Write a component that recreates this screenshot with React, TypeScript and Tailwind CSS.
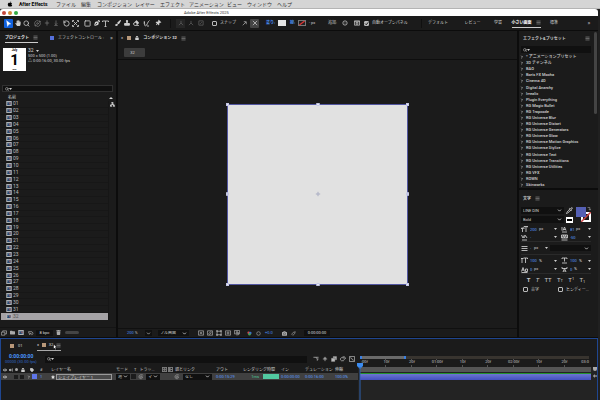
import type { ReactNode } from "react";
import {
  FaApple,
  FaCamera,
  FaEraser,
  FaEye,
  FaFolder,
  FaHandPaper,
  FaLock,
  FaPaintBrush,
  FaPenNib,
  FaStamp,
  FaStar,
  FaTag,
  FaThumbtack,
  FaTrash,
  FaVolumeUp,
} from "react-icons/fa";
import {
  ChevronDown,
  ChevronRight,
  Menu,
  Network,
  Orbit,
  Pipette,
  RotateCcw,
  Search,
  Square,
} from "lucide-react";

const menus = [
  { label: "ファイル", width: "w-[25px]" },
  { label: "編集", width: "w-[16px]" },
  { label: "コンポジション", width: "w-[38px]" },
  { label: "レイヤー", width: "w-[25px]" },
  { label: "エフェクト", width: "w-[29px]" },
  { label: "アニメーション", width: "w-[38px]" },
  { label: "ビュー", width: "w-[20px]" },
  { label: "ウィンドウ", width: "w-[30px]" },
  { label: "ヘルプ", width: "w-[20px]" },
];

const items = Array.from({ length: 32 }, (_, i) => String(i + 1).padStart(2, "0"));

const effects = [
  "* アニメーションプリセット",
  "3D チャンネル",
  "BAO",
  "Boris FX Mocha",
  "Cinema 4D",
  "Digital Anarchy",
  "Irrealix",
  "Plugin Everything",
  "RG Magic Bullet",
  "RG Trapcode",
  "RG Universe Blur",
  "RG Universe Distort",
  "RG Universe Generators",
  "RG Universe Glow",
  "RG Universe Motion Graphics",
  "RG Universe Stylize",
  "RG Universe Text",
  "RG Universe Transitions",
  "RG Universe Utilities",
  "RG VFX",
  "ROWN",
  "Skinworks",
];

const ticks = ["10f", "20f", "01:00f", "10f", "20f", "02:00f", "10f", "20f"];

const Slot = ({ label, active, children }: { label: string; active?: boolean; children: ReactNode }) => (
  <button
    aria-label={label}
    className={`flex h-[9px] w-[9px] shrink-0 items-center justify-center rounded-[1px] ${active ? "bg-[#1060dc] text-white" : ""}`}
  >
    {children}
  </button>
);

// Small line drawing on a 14 unit grid
const Glyph = ({ d, size = "size-[7px]", fill = false }: { d: string; size?: string; fill?: boolean }) => (
  <svg
    viewBox="0 0 14 14"
    className={`${size} shrink-0`}
    fill={fill ? "currentColor" : "none"}
    stroke="currentColor"
    strokeWidth={fill ? 0.5 : 1.7}
  >
    <path d={d} />
  </svg>
);

const Caret = () => (
  <svg viewBox="0 0 6 4" className="h-[2px] w-[3px] shrink-0" fill="currentColor">
    <path d="M0 0h6L3 4z" />
  </svg>
);

const Burger = () => <Menu strokeWidth={3} className="size-[5px] shrink-0 text-[#909090]" />;

function Select({ label, value, className = "" }: { label: string; value: string; className?: string }) {
  return (
    <div className={`relative flex shrink-0 items-center bg-[#101010] ${className}`}>
      <select aria-label={label} className="h-full w-full appearance-none pl-[2px] leading-none outline-none">
        <option>{value}</option>
      </select>
      <ChevronDown strokeWidth={4} className="pointer-events-none absolute right-[2px] size-[5px]" />
    </div>
  );
}

function SearchBox({ label, className = "" }: { label: string; className?: string }) {
  return (
    <div className={`flex items-center bg-[#101010] px-[2px] ${className}`}>
      <Search strokeWidth={3} className="size-[4px] shrink-0" />
      <Caret />
      <input aria-label={label} className="h-full min-w-0 flex-1 bg-transparent outline-none" />
    </div>
  );
}

function Check({ label, checked }: { label: string; checked?: boolean }) {
  return (
    <label className="flex items-center gap-[3px] whitespace-nowrap">
      <span className="relative flex">
        <input
          type="checkbox"
          defaultChecked={checked}
          className="size-[5px] appearance-none rounded-[1px] border border-[#bbb] checked:bg-[#bbb]"
        />
        {checked && (
          <svg viewBox="0 0 10 10" className="pointer-events-none absolute size-[5px]" fill="none" stroke="#222" strokeWidth="2">
            <path d="M2 5l2.500 2.500L8.500 2.500" />
          </svg>
        )}
      </span>
      {label}
    </label>
  );
}

const CompIcon = () => (
  <svg viewBox="0 0 12 11" className="h-[5px] w-[6px] shrink-0">
    <rect width="12" height="11" fill="#b4b6b8" />
    <rect x="2" y="2" width="8" height="7" fill="#55708c" />
    <circle cx="8" cy="5" r="1.500" fill="#b04848" />
    <path d="M2 9l3-5 3 5z" fill="#27476f" />
  </svg>
);

const Spiral = () => (
  <Glyph size="size-[6px]" d="M7 7c1-1 2 1 0 1.500C4 9 4 5 7 4.500c4 0 5 5 1 6.500C3 12 1 7 3 4c2-3 7-3 9-1" />
);

function MenuBar() {
  return (
    <nav className="flex h-[9px] items-center border-b border-[#b4b4b4] bg-[#d5d5d5] pl-[7px] text-[#333]">
      <FaApple className="size-[6px] text-black" />
      <b className="ml-[6px] w-[37px] whitespace-nowrap text-[5px] text-black">After Effects</b>
      {menus.map((m) => (
        <button key={m.label} className={`shrink-0 whitespace-nowrap text-left text-[5px] ${m.width}`}>
          {m.label}
        </button>
      ))}
    </nav>
  );
}

function TitleBar() {
  return (
    <div className="flex h-[7px] items-center rounded-t-[3px] bg-white px-[2px]">
      <div className="flex w-[182px] gap-[2px]">
        <i className="size-[4px] rounded-full bg-[#c4473c]" />
        <i className="size-[4px] rounded-full bg-[#d08a35]" />
        <i className="size-[4px] rounded-full bg-[#35ad45]" />
      </div>
      <span className="text-[#333]">Adobe After Effects 2025</span>
    </div>
  );
}

function Toolbar() {
  return (
    <header className="flex h-[14px] items-center bg-[#1b1b1b] text-[#d0d0d0]">
      <div className="flex w-[171px] shrink-0 items-center border-r border-[#101010] pl-[4px]">
        <div className="flex">
          <Slot label="Selection" active>
            <Glyph fill d="M3 1l9 7-4 .5L5 13z" />
          </Slot>
          <Slot label="Hand">
            <FaHandPaper className="size-[6px]" />
          </Slot>
          <Slot label="Zoom">
            <Search strokeWidth={2.5} className="size-[7px]" />
          </Slot>
        </div>
        <div className="ml-[2px] flex text-[#777]">
          <Slot label="Orbit">
            <Orbit strokeWidth={2.5} className="size-[7px]" />
          </Slot>
          <Slot label="Pan">
            <Glyph size="size-[6px]" d="M7 1v12M2 7h10" />
          </Slot>
          <Slot label="Dolly">
            <Glyph size="size-[6px]" d="M7 1v10M4 8l3 3 3-3M3 13h8" />
          </Slot>
        </div>
        <div className="ml-[2px] flex">
          <Slot label="Rotate">
            <RotateCcw strokeWidth={2.8} className="size-[7px]" />
          </Slot>
          <Slot label="Anchor point">
            <Glyph d="M1 4V1h3M10 1h3v3M13 10v3h-3M4 13H1v-3M3 3l8 8M11 3l-8 8" />
          </Slot>
        </div>
        <div className="ml-[3px] flex">
          <Slot label="Rectangle">
            <Square strokeWidth={2.8} className="size-[7px]" />
          </Slot>
          <Slot label="Pen">
            <FaPenNib className="size-[6px]" />
          </Slot>
          <Slot label="Text">
            <Glyph d="M1 4V2h12v2M7 2v11M5 13h4" />
          </Slot>
        </div>
        <div className="ml-[3px] flex">
          <Slot label="Brush">
            <FaPaintBrush className="size-[6px]" />
          </Slot>
          <Slot label="Clone stamp">
            <FaStamp className="size-[6px]" />
          </Slot>
          <Slot label="Eraser">
            <FaEraser className="size-[6px]" />
          </Slot>
        </div>
        <div className="ml-[2px] flex gap-[2px]">
          <Slot label="Roto brush">
            <Glyph d="M2 2c2 0 0 10 3 10s4-9 8-11M8 12h4M1 6h3" />
          </Slot>
          <Slot label="Puppet pin">
            <FaThumbtack className="size-[6px] rotate-45" />
          </Slot>
        </div>
      </div>
      <div className="flex w-[39px] shrink-0 justify-center gap-px text-[#606060]">
        <span className="bg-[#262626]">
          <Slot label="Local axis">
            <Glyph size="size-[6px]" d="M7 2v5l-5 5M7 7l5 5" />
          </Slot>
        </span>
        <Slot label="World axis">
          <Glyph size="size-[6px]" d="M7 2v5l-5 5M7 7l5 5" />
        </Slot>
        <Slot label="View axis">
          <Glyph size="size-[6px]" d="M2 2h10v10H2zM5 9l4-4" />
        </Slot>
      </div>
      <div className="flex w-[56px] shrink-0 items-center pl-[2px]">
        <div className="w-[28px]">
          <Check label="スナップ" />
        </div>
        <Slot label="Snap edges">
          <Glyph size="size-[5px]" d="M2 12l9-9M5 2h7v7" />
        </Slot>
        <span className="ml-px rounded-[1px] bg-[#444]">
          <Slot label="Snap corners">
            <Glyph size="size-[6px]" d="M2 2l10 10M12 2L2 12" />
          </Slot>
        </span>
      </div>
      <div className="flex w-[62px] shrink-0 items-center">
        <a href="#fill" className="w-[12px] whitespace-nowrap font-bold text-[#4a90f5]">塗り:</a>
        <button aria-label="Fill colour" className="h-[6px] w-[8px] bg-[#e6e6e6]" />
        <a href="#stroke" className="ml-[4px] w-[8px] whitespace-nowrap font-bold text-[#4a90f5]">線:</a>
        <button aria-label="Stroke colour" className="h-[6px] w-[8px] border border-[#777] bg-[#222]">
          <svg viewBox="0 0 8 6" className="size-full" stroke="#d33" strokeWidth="2">
            <path d="M0 6L8 0" />
          </svg>
        </button>
        <span className="ml-[3px] whitespace-nowrap">- px</span>
      </div>
      <div className="flex w-[94px] shrink-0 items-center border-r border-[#101010]">
        <span className="w-[12px] whitespace-nowrap">追加:</span>
        <Slot label="Add">
          <Glyph size="size-[6px]" d="M7 2a5 5 0 100 10A5 5 0 007 2zM7 6v2" />
        </Slot>
        <span className="ml-[3px] mr-[3px]">
          <Slot label="Panel options">
            <Glyph size="size-[6px]" d="M1 2h12v10H1zM1 4h12M5 6v4h4V6z" />
          </Slot>
        </span>
        <Check label="自動オープンパネル" checked />
      </div>
      <div className="flex flex-1 items-center justify-between pl-[6px] pr-[26px]">
        <button className="w-[27px] text-left">デフォルト</button>
        <button className="w-[20px] text-left">レビュー</button>
        <button>学習</button>
        <button className="flex h-[9px] items-center gap-[4px] border-b border-[#ccc] font-bold text-white">
          小さい画面
          <Burger />
        </button>
        <button>標準</button>
      </div>
      <button aria-label="More workspaces" className="w-[14px] shrink-0 pr-[4px] text-[6px]">»</button>
    </header>
  );
}

function ProjectPanel() {
  return (
    <section className="flex w-[116px] shrink-0 flex-col bg-[#1b1b1b]">
      <div className="flex h-[14px] items-center pl-[5px]">
        <div className="flex h-[9px] w-[33px] items-center justify-between border-b border-[#ccc] font-bold text-[#eee]">
          プロジェクト
          <Burger />
        </div>
        <i className="ml-[12px] size-[4px] bg-[#5570dc]" />
        <span className="ml-[4px] w-[52px] whitespace-nowrap">エフェクトコントロール :</span>
        <button aria-label="More panels" className="text-[6px]">»</button>
      </div>
      <div className="flex h-[40px] gap-[2px] pl-[3px] pt-[3px]">
        <div className="flex size-[23px] flex-col items-center justify-between bg-white py-px font-bold text-black">
          <span className="text-[3px]">July</span>
          <span className="text-[15px] leading-[13px]">1</span>
          <span className="text-[2px]">mon</span>
        </div>
        <div className="flex flex-col">
          <span className="flex h-[5px] items-center gap-[2px] text-[5px]">
            32 <Caret />
          </span>
          <span className="h-[5px] pt-px">500 x 500 (1.00)</span>
          <span className="h-[5px] pt-px">△ 0:00:16:00, 30.00 fps</span>
        </div>
      </div>
      <SearchBox label="Search project" className="ml-[2px] mr-[3px] h-[7px] border border-[#303030]" />
      <div className="mt-[3px] flex h-[6px] items-center justify-between pl-[8px] pr-[3px]">
        名前
        <svg viewBox="0 0 8 4" className="h-[2px] w-[4px]" fill="currentColor">
          <path d="M0 4h8L4 0z" />
        </svg>
      </div>
      <div className="flex flex-1">
        <ul className="flex w-[109px] flex-col border-r border-[#161616] pl-px text-[5px] text-[#bbb]">
          {items.map((n) => (
            <li
              key={n}
              className={`flex flex-1 items-center gap-px border-b pl-[5px] ${n === "32" ? "border-[#a5a3a6] bg-[#a5a3a6] text-[#555]" : "border-[#171717]"}`}
            >
              <CompIcon />
              {n}
            </li>
          ))}
        </ul>
        <Network strokeWidth={4} className="ml-px mt-px size-[5px]" />
      </div>
      <footer className="mt-[7px] flex h-[10px] items-center border-t border-[#141414] pl-px text-[#aaa]">
        <Glyph size="size-[6px]" d="M1 5h8v7H1zM4 5V2h9v7H9" />
        <FaFolder className="ml-[3px] size-[5px]" />
        <span className="ml-[3px] flex">
          <CompIcon />
        </span>
        <Glyph size="ml-[4px] size-[6px]" d="M1 4h8l3 4-3 3-3-4-2 4z" />
        <button className="ml-[2px] h-[6px] w-[17px] bg-[#101010] text-[#ddd]">8 bpc</button>
        <FaTrash className="ml-[3px] size-[5px]" />
        <i className="ml-[4px] h-[3px] w-[14px] rounded-full bg-[#444]" />
      </footer>
    </section>
  );
}

const handle = "absolute size-[3px] bg-[#e8e9f5] border border-[#c4c7e4]";

function Composition() {
  return (
    <section className="flex min-w-0 flex-1 flex-col bg-[#1b1b1b]">
      <div className="flex h-[14px] items-center gap-[4px] pl-[3px]">
        <span>×</span>
        <i className="size-[4px] bg-[#b8987a]" />
        <FaLock className="size-[4px]" />
        <span className="font-bold text-[#ddd]">コンポジション 32</span>
        <Burger />
      </div>
      <div className="h-[15px] border-b border-[#0e0e0e] pl-[6px] pt-[3px]">
        <button className="h-[9px] w-[21px] rounded-[1px] bg-[#3c3c3c] pr-[4px]">32</button>
      </div>
      <div className="flex flex-1 items-center justify-center">
        <div className="relative size-[181px] border border-[#5256a0] bg-[#e1e1e1]">
          <i className={`${handle} -left-[2px] -top-[2px]`} />
          <i className={`${handle} -top-[2px] left-1/2 -translate-x-1/2`} />
          <i className={`${handle} -right-[2px] -top-[2px]`} />
          <i className={`${handle} -left-[2px] top-1/2 -translate-y-1/2`} />
          <i className={`${handle} -right-[2px] top-1/2 -translate-y-1/2`} />
          <i className={`${handle} -bottom-[2px] -left-[2px]`} />
          <i className={`${handle} -bottom-[2px] left-1/2 -translate-x-1/2`} />
          <i className={`${handle} -bottom-[2px] -right-[2px]`} />
          <svg viewBox="0 0 10 10" className="absolute left-1/2 top-1/2 size-[5px] -translate-1/2" fill="none" stroke="#a3a6bf">
            <circle cx="5" cy="5" r="2.500" />
            <path d="M5 0v10M0 5h10" />
          </svg>
        </div>
      </div>
      <footer className="flex h-[9px] items-center border-t border-[#101010] pl-[9px] text-[#aaa]">
        <span className="w-[18px] whitespace-nowrap"><b className="font-normal text-[#4a90f5]">200</b> %</span>
        <button aria-label="Magnification" className="flex h-[6px] w-[7px] items-center justify-center bg-[#101010]">
          <ChevronDown strokeWidth={4} className="size-[5px]" />
        </button>
        <Select label="Resolution" value="フル画面" className="ml-[6px] h-[6px] w-[31px] text-[#ccc]" />
        <div className="ml-[7px] flex">
          <Slot label="Fast preview"><Glyph size="size-[6px]" d="M1 2h12v10H1zM4 5l6 4M10 5L4 9" /></Slot>
          <Slot label="Transparency grid"><Glyph size="size-[6px]" d="M1 2h12v10H1zM3 9l7-6M5 11l6-5" /></Slot>
          <Slot label="Mask visibility"><Glyph size="size-[6px]" d="M3 3h9v8H2zM1 1h3v3H1zM10 1h3v3h-3zM1 10h3v3H1zM10 10h3v3h-3z" /></Slot>
          <Slot label="Region of interest"><Glyph size="size-[6px]" d="M1 2h12v10H1zM5 5h4v4H5z" /></Slot>
          <Slot label="Grid and guides"><Glyph size="size-[6px]" d="M1 1h12v8H1zM7 1v12M4 5h6v7" /></Slot>
        </div>
        <svg viewBox="0 0 12 12" className="ml-[6px] size-[5px]">
          <circle cx="4" cy="4" r="3" fill="#d04848" />
          <circle cx="8" cy="5" r="3" fill="#3b6fd0" />
          <circle cx="6" cy="8" r="3" fill="#3f9e58" />
        </svg>
        <Glyph size="ml-[4px] size-[5px]" d="M7 2a5 5 0 100 10A5 5 0 007 2z" />
        <span className="ml-[4px] w-[17px] text-[#4a90f5]">+0.0</span>
        <FaCamera className="size-[5px]" />
        <Glyph size="ml-[4px] size-[5px]" d="M2 9l4-5 6-2-2 6-5 4z" />
        <button className="ml-[8px] h-[6px] w-[26px] bg-[#101010] text-[#ddd]">0:00:00:00</button>
      </footer>
    </section>
  );
}

function Value({ icon, label, value, unit, className }: { icon: ReactNode; label: string; value: string; unit: string; className: string }) {
  return (
    <label className={`flex h-full shrink-0 items-center ${className}`}>
      <span className="flex w-[9px] shrink-0 items-center">{icon}</span>
      <input
        aria-label={label}
        defaultValue={value}
        className={`min-w-0 bg-transparent text-[#5a9dff] outline-none ${value.length > 2 ? "w-[9px]" : value.length > 1 ? "w-[6px]" : "w-[4px]"}`}
      />
      <span className="flex-1">{unit}</span>
      <Caret />
    </label>
  );
}

function SidePanels() {
  return (
    <aside className="flex w-[79px] shrink-0 flex-col gap-[2px] bg-[#0c0c0c]">
      <section className="flex flex-1 bg-[#1b1b1b]">
        <div className="flex min-w-0 flex-1 flex-col">
          <div className="flex h-[15px] items-center justify-between pl-[4px] pr-[4px] font-bold text-[#ccc]">
            エフェクト&プリセット
            <Burger />
          </div>
          <SearchBox label="Search effects" className="ml-[2px] mr-[3px] h-[7px]" />
          <ul className="mt-px flex flex-1 flex-col font-medium text-[#d4d4d4]">
            {effects.map((name) => (
              <li key={name} className="flex flex-1 items-center gap-[2px] whitespace-nowrap pl-px">
                <ChevronRight strokeWidth={4} className="size-[4px]" />
                {name}
              </li>
            ))}
          </ul>
        </div>
        <i className="mr-px mt-px h-[82px] w-[3px] rounded-full bg-[#444]" />
      </section>
      <section className="flex h-[147px] flex-col bg-[#1b1b1b] pl-[2px] pr-[7px]">
        <div className="flex h-[17px] items-center gap-[4px] pl-[2px] font-bold text-[#ccc]">
          文字
          <Burger />
        </div>
        <div className="flex h-[18px]">
          <div className="flex w-[43px] flex-col gap-[2px]">
            <Select label="Font" value="LINE DIN" className="h-[7px]" />
            <Select label="Weight" value="Bold" className="h-[7px]" />
          </div>
          <div className="ml-[2px] flex w-[8px] flex-col gap-[3px]">
            <Pipette strokeWidth={2.8} className="size-[7px]" />
            <button aria-label="Black and white" className="h-[6px] w-[7px] border border-white bg-white">
              <i className="block h-[2px] bg-black" />
            </button>
          </div>
          <div className="relative ml-[2px] h-[15px] w-[15px]">
            <button aria-label="Stroke" className="absolute bottom-0 right-0 size-[10px] border-2 border-white bg-[#1b1b1b]" />
            <svg viewBox="0 0 10 10" className="absolute bottom-0 right-0 size-[10px]" stroke="#c44" strokeWidth="1.500">
              <path d="M0 10L10 0" />
            </svg>
            <button aria-label="Fill" className="absolute left-0 top-0 size-[10px] bg-[#5560b4]" />
            <Glyph size="absolute right-0 top-0 size-[4px]" d="M2 2h8v9M7 8l3 3 3-3" />
          </div>
        </div>
        <div className="flex h-[8px] items-center justify-between">
          <Value className="w-[36px]" label="Size" value="200" unit="px" icon={<Glyph d="M1 6V4h5v2M3 4v8M6 3V1h8v2M10 1v11" />} />
          <Value className="w-[30px]" label="Leading" value="81" unit="px" icon={<Glyph d="M2 12h10M4 9l3-7 3 7M5 7h4M2 2v7" />} />
        </div>
        <div className="flex h-[9px] items-center justify-between border-b border-[#2a2a2a]">
          <Value className="w-[36px]" label="Kerning" value="-" unit="" icon={<Glyph d="M1 2l3 6 3-6M6 8l3-5 3 5M2 12h10" />} />
          <Value className="w-[30px]" label="Tracking" value="-50" unit="" icon={<Glyph d="M1 2h12v6H1zM3 8l2-6 2 6 2-6 2 6M1 12h12" />} />
        </div>
        <div className="flex h-[13px] items-center justify-between border-b border-[#2a2a2a]">
          <Value className="w-[27px]" label="Stroke width" value="-" unit="px" icon={<Glyph d="M1 3h12M1 7h12M1 11h12" />} />
          <Select label="Stroke order" value="" className="h-[6px] w-[41px]" />
        </div>
        <div className="mt-px flex h-[9px] items-center justify-between">
          <Value className="w-[36px]" label="Vertical scale" value="100" unit="%" icon={<Glyph d="M2 2v10M0 4l2-2 2 2M5 3V2h8v2M9 2v10" />} />
          <Value className="w-[30px]" label="Horizontal scale" value="100" unit="%" icon={<Glyph d="M2 4V2h10v2M7 2v7M2 12h10" />} />
        </div>
        <div className="flex h-[9px] items-center justify-between border-b border-[#2a2a2a]">
          <Value className="w-[36px]" label="Baseline" value="0" unit="px" icon={<Glyph d="M1 11l3-8 3 8M2 8h4M9 6h4v5H9zM1 13h12" />} />
          <Value className="w-[30px]" label="Tsume" value="0" unit="%" icon={<Glyph d="M2 2v3h10V2M4 12l3-7 3 7M5 10h4" />} />
        </div>
        <div className="flex h-[11px] items-center justify-around px-[3px] text-[6px] text-[#ccc]">
          <button className="font-bold">T</button>
          <button className="italic">T</button>
          <button>TT</button>
          <button>T<small className="text-[4px]">T</small></button>
          <button>T<sup className="text-[4px] leading-none">1</sup></button>
          <button>T<sub className="text-[4px] leading-none">1</sub></button>
        </div>
        <div className="flex h-[9px] items-center pl-[2px]">
          <div className="w-[35px]">
            <Check label="合字" />
          </div>
          <Check label="ヒンディー..." />
        </div>
      </section>
    </aside>
  );
}

function LayerTable() {
  return (
    <table className="w-full table-fixed border-collapse text-left leading-none">
      <colgroup>
        <col className="w-[26px]" />
        <col className="w-[11px]" />
        <col className="w-[13px]" />
        <col className="w-[65px]" />
        <col className="w-[15px]" />
        <col className="w-[31px]" />
        <col className="w-[54px]" />
        <col className="w-[27px]" />
        <col className="w-[38px]" />
        <col className="w-[24px]" />
        <col className="w-[30px]" />
        <col className="w-[23px]" />
      </colgroup>
      <thead className="h-[7px] whitespace-nowrap text-[#ccc] [&_th]:p-0 [&_th]:font-normal">
        <tr>
          <th>
            <span className="flex items-center gap-px pl-[2px]">
              <FaEye className="size-[4px]" />
              <FaVolumeUp className="ml-px size-[4px]" />
              <i className="ml-px size-[3px] rounded-full bg-[#aaa]" />
              <FaLock className="ml-[2px] size-[4px]" />
            </span>
          </th>
          <th><FaTag className="ml-[3px] size-[4px]" /></th>
          <th><span className="pl-[2px]">#</span></th>
          <th>レイヤー名</th>
          <th>モード</th>
          <th>
            <span className="flex gap-[3px] pl-[3px]"><span>T</span><span>トラッ...</span></span>
          </th>
          <th>
            <span className="flex items-center gap-px">
              <Glyph size="size-[5px]" d="M1 1h12v12H1zM5 5h4v4H5z" />
              <Glyph size="size-[5px]" d="M1 1h12v12H1zM4 4l6 3-6 3z" />
              <span className="pl-px">親とリンク</span>
            </span>
          </th>
          <th>アウト</th>
          <th>レンダリング時間</th>
          <th>イン</th>
          <th>デュレーション</th>
          <th>伸縮</th>
        </tr>
      </thead>
      <tbody className="h-[7px] whitespace-nowrap bg-[#404040] text-[#5a9dff] [&_td]:p-0">
        <tr>
          <td>
            <span className="flex items-center gap-[2px] pl-[2px] text-[#ccc]">
              <FaEye className="size-[4px]" />
              <i className="ml-[5px] size-[4px] bg-[#1c1c1c]" />
              <i className="size-[4px] bg-[#1c1c1c]" />
            </span>
          </td>
          <td>
            <span className="flex items-center gap-px text-[#ccc]">
              <ChevronRight strokeWidth={4} className="size-[4px]" />
              <i className="size-[5px] bg-[#5f76e8]" />
            </span>
          </td>
          <td><span className="pl-[2px]">1</span></td>
          <td>
            <span className="flex items-center gap-px text-[#ddd]">
              <FaStar className="size-[4px]" />
              <input
                aria-label="Layer name"
                defaultValue="シェイプレイヤー 1"
                className="h-[6px] w-[56px] border border-[#999] bg-[#4a4a4a] pl-px leading-none outline-none"
              />
            </span>
          </td>
          <td><Select label="Mode" value="通" className="h-[6px] w-[14px] text-[#ccc]" /></td>
          <td>
            <span className="flex items-center gap-[2px] text-[#999]">
              <i className="size-[5px] bg-[#1c1c1c]" />
              <Spiral />
              <Select label="Track matte" value="マ" className="h-[6px] w-[14px] text-[#ccc]" />
            </span>
          </td>
          <td>
            <span className="flex items-center gap-[3px] pl-[12px] text-[#999]">
              <Spiral />
              <Select label="Parent" value="なし" className="h-[6px] w-[29px] text-[#ccc]" />
            </span>
          </td>
          <td>0:00:15:29</td>
          <td>
            <span className="flex items-center justify-end gap-[4px] pr-[2px] text-[#4cc89b]">
              1ms
              <i className="h-[5px] w-[16px] bg-[#52c9a0]" />
            </span>
          </td>
          <td>0:00:00:00</td>
          <td>0:00:16:00</td>
          <td>100.0%</td>
        </tr>
      </tbody>
    </table>
  );
}

function TimeRuler() {
  return (
    <div className="relative flex flex-1 flex-col bg-[#232323] pl-[2px] pr-[6px]">
      <div className="-ml-[2px] -mr-[6px] bg-[#1b1b1b] pl-[2px] pr-[8px] pt-[4px]">
        <div className="flex h-[3px] bg-[#38342f]">
          <div className="flex w-1/5 justify-between bg-[#6a6a6a]">
            <i className="w-[2px] bg-[#3b7fe0]" />
            <i className="w-[2px] bg-[#3b7fe0]" />
          </div>
        </div>
        <div className="relative flex h-[8px] text-[#c4c4c4]">
          <span className="flex-1 pl-px pt-px">:00f</span>
          {ticks.map((t, i) => (
            <div key={i} className="flex flex-1 border-l border-[#555] pt-px">
              <span className="h-[5px] -translate-x-1/2 bg-[#1b1b1b]">{t}</span>
            </div>
          ))}
          <span className="absolute right-0 pt-px">03:0</span>
        </div>
      </div>
      <div className="h-[5px] bg-[#555]" />
      <div className="mt-px h-px bg-[#23922d]" />
      <div className="h-[6px] bg-linear-to-b from-[#6c76d0] to-[#4350bf]" />
      <svg viewBox="0 0 7 45" className="absolute -left-[2px] top-[11px] h-[38px] w-[7px]" preserveAspectRatio="xMidYMin slice">
        <path d="M1 0h6v3L4 6 1 3z" fill="#3b8bf0" />
        <path d="M4 4v41" stroke="#2f62b0" strokeWidth="1" />
      </svg>
      <div className="absolute right-0 top-[15px] flex w-[4px] flex-col gap-[3px] text-[#aaa]">
        <i className="h-[4px] rounded-b-full bg-[#aaa]" />
        <Glyph size="size-[4px]" fill d="M0 7l6-6v4h8v4H6v4z" />
      </div>
    </div>
  );
}

function Timeline() {
  return (
    <section className="flex h-[62px] shrink-0 flex-col border-x border-t border-[#1f4690] bg-[#1b1b1b]">
      <div className="flex h-[13px] items-center pl-[9px]">
        <i className="size-[4px] bg-[#b8987a]" />
        <span className="ml-[4px] w-[19px]">01</span>
        <div className="relative flex h-[10px] w-[24px] items-center justify-between border-b border-[#aaa] text-[#ddd]">
          <span>×</span>
          <i className="size-[4px] bg-[#b8987a]" />
          <span>32</span>
          <Burger />
          <svg viewBox="0 0 8 12" className="absolute left-[16px] top-[3px] h-[6px] w-[4px]" fill="#fff" stroke="#000">
            <path d="M1 0v10l2-2 2 4 1-1-1-4h3z" />
          </svg>
        </div>
      </div>
      <div className="flex flex-1">
        <div className="flex w-[357px] shrink-0 flex-col">
          <div className="flex h-[14px] items-center">
            <div className="flex w-[44px] shrink-0 flex-col pl-[8px] text-[#2f66c4]">
              <b className="h-[6px] whitespace-nowrap text-[5px] text-[#4a98ff]">0:00:00:00</b>
              <span className="-ml-[4px] whitespace-nowrap">00000 (30.00 fps)</span>
            </div>
            <SearchBox label="Search layers" className="h-[7px] w-[262px]" />
            <div className="ml-[4px] flex text-[#bbb]">
              <Slot label="Mini flowchart"><Glyph size="size-[6px]" d="M1 3h6l3 4h3M7 3h6M10 7v4" /></Slot>
              <Slot label="Shy layers"><Glyph size="size-[6px]" d="M7 2v10M2 7h10M4 5h6" /></Slot>
              <Slot label="Frame blending"><Glyph size="size-[6px]" fill d="M1 5h8v8H1zM5 1h8v8h-3V4H5z" /></Slot>
              <Slot label="Motion blur"><Glyph size="size-[6px]" d="M3 11a4 4 0 010-7h5a4 4 0 010 7zM6 2h5l2 5" /></Slot>
              <Slot label="Graph editor"><Glyph size="size-[6px]" d="M1 1h12v12H1zM3 4c5 0 3 6 8 6" /></Slot>
            </div>
          </div>
          <LayerTable />
        </div>
        <TimeRuler />
      </div>
    </section>
  );
}

export default function App() {
  return (
    <div className="flex min-h-screen flex-col overflow-hidden bg-[#202020] font-['Roboto','Noto_Sans_CJK_JP',sans-serif] text-[4px] leading-none text-[#d0d0d0]">
      <MenuBar />
      <div className="flex flex-1 flex-col pr-[2px]">
        <TitleBar />
        <Toolbar />
        <main className="flex flex-1 gap-[2px] border-y border-[#0c0c0c] bg-[#0c0c0c]">
          <ProjectPanel />
          <Composition />
          <SidePanels />
        </main>
        <Timeline />
      </div>
    </div>
  );
}
